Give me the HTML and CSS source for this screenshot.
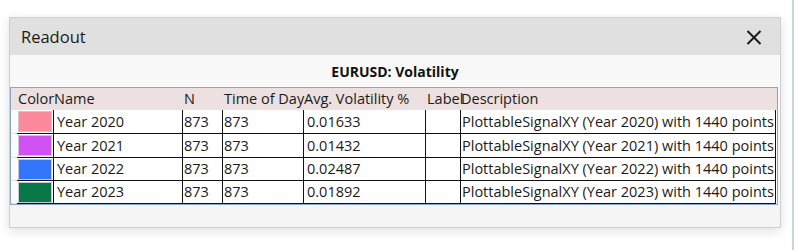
FILE: index.html
```html
<!DOCTYPE html>
<html lang="en">
<head>
  <meta charset="UTF-8"/>
  <meta name="viewport" content="width=device-width,initial-scale=1"/>
  <title>Readout</title>
  <link rel="stylesheet" href="styles.css">
</head>
<body>

  <div class="screen">
    <div class="window">
      <div class="titlebar">
        <span class="title">Readout</span>
        <button class="close" aria-label="Close">
          <svg width="16" height="15" viewBox="0 0 16 15">
            <path d="M1.5 1 L14.5 14 M14.5 1 L1.5 14" stroke="#1a1a1a" stroke-width="2" fill="none"/>
          </svg>
        </button>
      </div>

      <div class="content">
        <h2 class="plot-title">EURUSD: Volatility</h2>

        <div class="grid">
          <table>
            <colgroup>
              <col class="c-head"><col class="c-color"><col class="c-name"><col class="c-n">
              <col class="c-time"><col class="c-avg"><col class="c-label"><col class="c-desc"><col class="c-fill">
            </colgroup>
            <thead>
              <tr>
                <th></th>
                <th>Color</th>
                <th class="h-name">Name</th>
                <th>N</th>
                <th>Time of Day</th>
                <th class="h-avg">Avg. Volatility %</th>
                <th>Label</th>
                <th class="h-desc">Description</th>
                <th></th>
              </tr>
            </thead>
            <tbody>
              <tr>
                <td class="rowhead"></td>
                <td class="swatch-cell"><span class="swatch pink"></span></td>
                <td class="name">Year 2020</td>
                <td>873</td>
                <td>873</td>
                <td class="avg">0.01633</td>
                <td></td>
                <td>PlottableSignalXY (Year 2020) with 1440 points</td>
                <td class="fill"></td>
              </tr>
              <tr>
                <td class="rowhead"></td>
                <td class="swatch-cell"><span class="swatch purple"></span></td>
                <td class="name">Year 2021</td>
                <td>873</td>
                <td>873</td>
                <td class="avg">0.01432</td>
                <td></td>
                <td>PlottableSignalXY (Year 2021) with 1440 points</td>
                <td class="fill"></td>
              </tr>
              <tr>
                <td class="rowhead"></td>
                <td class="swatch-cell"><span class="swatch blue"></span></td>
                <td class="name">Year 2022</td>
                <td>873</td>
                <td>873</td>
                <td class="avg">0.02487</td>
                <td></td>
                <td>PlottableSignalXY (Year 2022) with 1440 points</td>
                <td class="fill"></td>
              </tr>
              <tr>
                <td class="rowhead"></td>
                <td class="swatch-cell"><span class="swatch green"></span></td>
                <td class="name">Year 2023</td>
                <td>873</td>
                <td>873</td>
                <td class="avg">0.01892</td>
                <td></td>
                <td>PlottableSignalXY (Year 2023) with 1440 points</td>
                <td class="fill"></td>
              </tr>
            </tbody>
          </table>
        </div>

        <div class="footer"></div>
      </div>
    </div>
  </div>

</body>
</html>
```

FILE: styles.css
```css
* { box-sizing: border-box; margin: 0; padding: 0; }

body {
  background: #fff;
  font-family: "Open Sans", "Noto Sans", sans-serif;
  color: #1b1b1b;
  overflow: hidden;
}

.screen {
  width: 794px;
  height: 250px;
  padding: 17px 0 0 9px;
  border-right: 2px solid #cbd5e2;
}

.window {
  width: 772px;
  height: 211px;
  border: 1px solid #cfcfcf;
  background: #f8f8f8;
  box-shadow: 0 3px 10px rgba(0,0,0,0.12);
  display: flex;
  flex-direction: column;
}

.titlebar {
  height: 37px;
  background: #e0e0e0;
  display: flex;
  align-items: center;
  justify-content: space-between;
  padding: 0 18px 0 11px;
}

.title {
  font-size: 16.5px;
  color: #1a1a1a;
  line-height: 1;
  margin-top: 1px;
}

.close {
  border: none;
  background: none;
  display: flex;
  margin-top: 2px;
}

.content {
  flex: 1;
  display: flex;
  flex-direction: column;
}

.plot-title {
  height: 32px;
  line-height: 33px;
  text-align: center;
  font-size: 14px;
  font-weight: 700;
  color: #111;
}

.grid {
  border: 1px solid #88a6cc;
  margin-right: 2px;
  background: #fff;
}

table {
  border-collapse: separate;
  border-spacing: 0;
  table-layout: fixed;
  width: 766px;
  font-size: 14.5px;
}

.c-head { width: 6px; }
.c-color { width: 37px; }
.c-name { width: 129px; }
.c-n { width: 40px; }
.c-time { width: 81px; }
.c-avg { width: 122px; }
.c-label { width: 35px; }
.c-desc { width: 315px; }
.c-fill { width: 1px; }

thead tr { height: 21px; background: #ece0e0; }

th {
  font-weight: 400;
  text-align: left;
  padding: 0 0 0 1px;
  white-space: nowrap;
  overflow: visible;
  line-height: 22px;
}

th.h-name, th.h-avg, th.h-desc { padding-left: 0; }

tbody tr { height: 24px; }
tbody tr:nth-child(n+3) { height: 23px; }

td {
  border-right: 1px solid #111;
  border-bottom: 1px solid #111;
  padding: 1px 0 0 1px;
  white-space: nowrap;
  overflow: hidden;
  line-height: 1;
}

td.name, td.avg { padding-left: 3px; }

td.rowhead {
  border-right: none;
  border-bottom: 1px solid #e2e2e2;
  background: #fafbfc;
  padding: 0;
}

td.fill {
  border: none;
  padding: 0;
}

td.swatch-cell { padding: 0 1px; }

.swatch {
  display: block;
  width: 34px;
  height: 21px;
  border: 1px solid #c8c8c8;
}

.pink { background: #fd8a9c; }
.purple { background: #d251f3; }
.blue { background: #3476fb; }
.green { background: #087849; }

.footer {
  flex: 1;
  background: #f5f5f5;
}
```
